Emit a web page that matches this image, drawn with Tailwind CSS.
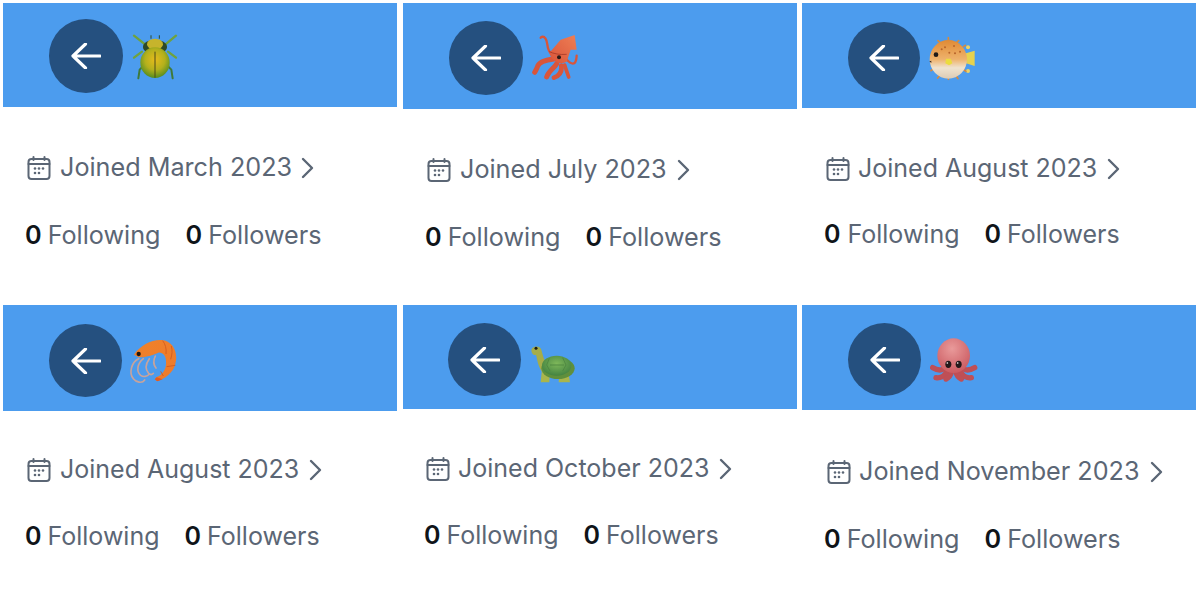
<!DOCTYPE html>
<html lang="en">
<head>
  <meta charset="UTF-8" />
  <title>Joined profiles</title>
  <script src="https://cdn.jsdelivr.net/npm/@tailwindcss/browser@4"></script>
</head>
<body class="bg-white overflow-hidden font-['Inter',sans-serif] text-[25.2px] text-[#5b6675]">
  <svg class="absolute w-0 h-0">
    <symbol id="arrow" viewBox="0 0 30 26"><path d="M29 13H2M14.500 1 2 13l12.500 12" fill="none" stroke="#fff" stroke-width="3.200" stroke-linecap="round" stroke-linejoin="round"/></symbol>
    <symbol id="calendar" viewBox="0 0 24 24"><g fill="none" stroke="#5b6675" stroke-width="2"><rect x="1.500" y="3" width="21" height="20" rx="3"/><path d="M1.500 8h21M6.500 1v3M17.500 1v3" stroke-linecap="round"/></g><g fill="#5b6675"><circle cx="8" cy="12.500" r="1.300"/><circle cx="12" cy="12.500" r="1.300"/><circle cx="16" cy="12.500" r="1.300"/><circle cx="8" cy="17" r="1.300"/><circle cx="12" cy="17" r="1.300"/></g></symbol>
    <symbol id="chevron" viewBox="0 0 13 22"><path d="M2 2l9 9-9 9" fill="none" stroke="#5b6675" stroke-width="2.400" stroke-linecap="round" stroke-linejoin="round"/></symbol>
    <defs>
      <radialGradient id="beetle" cx="0.5" cy="0.4" r="0.62"><stop offset="0" stop-color="#e6bb1c"/><stop offset="0.55" stop-color="#b3b01c"/><stop offset="1" stop-color="#4f8a22"/></radialGradient>
      <linearGradient id="puffer" x1="0" y1="0" x2="0" y2="1"><stop offset="0" stop-color="#e08a34"/><stop offset="0.5" stop-color="#eeb26c"/><stop offset="0.72" stop-color="#efe3cf"/><stop offset="1" stop-color="#dccbb4"/></linearGradient>
      <linearGradient id="squid" x1="1" y1="0" x2="0" y2="1"><stop offset="0" stop-color="#ee7f55"/><stop offset="1" stop-color="#d9553a"/></linearGradient>
      <linearGradient id="shrimp" x1="0" y1="0" x2="1" y2="1"><stop offset="0" stop-color="#f0822a"/><stop offset="1" stop-color="#ee7a2c"/></linearGradient>
      <radialGradient id="octo" cx="0.45" cy="0.3" r="0.75"><stop offset="0" stop-color="#e99a9a"/><stop offset="1" stop-color="#c9575e"/></radialGradient>
      <radialGradient id="shell" cx="0.5" cy="0.4" r="0.65"><stop offset="0" stop-color="#7fb85a"/><stop offset="1" stop-color="#3f7f3f"/></radialGradient>
    </defs>
  </svg>

  <div class="grid grid-cols-[400px_399px_401px] grid-rows-[302px_299px] pt-[3px]">

    <!-- beetle -->
    <section class="pl-[3px]">
      <div class="w-[394px] h-[104px] bg-[#4c9cee] pl-[46px] pt-[16px]">
        <div class="flex items-center">
          <button class="w-[74px] h-[74px] rounded-full bg-[#25507f] flex items-center justify-center"><svg class="w-[30px] h-[26px]"><use href="#arrow"/></svg></button>
          <svg class="w-[50px] h-[50px] ml-[7px] overflow-visible blur-[0.4px]" viewBox="300 62 150 150">
            <g fill="none" stroke="#6fa23e" stroke-width="7" stroke-linecap="round"><path d="M312 76l38 30M438 76l-36 30"/><path d="M312 142l24-18M438 142l-24-18"/></g>
            <g fill="none" stroke="#3f7a3a" stroke-width="6" stroke-linecap="round"><path d="M325 204l4-26 8-8M428 204l-4-26-8-8"/><path d="M363 84v-8M388 84v-8" stroke="#2c4a2a" stroke-width="3"/></g>
            <ellipse cx="375" cy="110" rx="36" ry="22" fill="#2f4a26"/>
            <ellipse cx="375" cy="102" rx="24" ry="17" fill="#c6b42c"/>
            <ellipse cx="375" cy="157" rx="44" ry="46" fill="url(#beetle)"/>
            <path d="M375 124v78" stroke="#4b4a18" stroke-width="3"/>
          </svg>
        </div>
      </div>
      <div class="flex items-center h-[34px] mt-[44px] pl-[24px]">
        <svg class="w-[24px] h-[24px] mr-[9px]"><use href="#calendar"/></svg><span>Joined March 2023</span><svg class="w-[13px] h-[22px] ml-[9px]"><use href="#chevron"/></svg>
      </div>
      <div class="flex items-center h-[34px] mt-[34px] pl-[22px]">
        <b class="font-semibold text-[#0f1419] mr-[6px]">0</b><span class="mr-[25px]">Following</span><b class="font-semibold text-[#0f1419] mr-[6px]">0</b><span>Followers</span>
      </div>
    </section>

    <!-- squid -->
    <section class="pl-[3px]">
      <div class="w-[394px] h-[106px] bg-[#4c9cee] pl-[46px] pt-[18px]">
        <div class="flex items-center">
          <button class="w-[74px] h-[74px] rounded-full bg-[#25507f] flex items-center justify-center"><svg class="w-[30px] h-[26px]"><use href="#arrow"/></svg></button>
          <svg class="w-[50px] h-[50px] ml-[7px] overflow-visible blur-[0.4px]" viewBox="300 68 150 150">
            <g fill="none" stroke="#d9553a" stroke-linecap="round" stroke-linejoin="round">
              <path d="M362 128c-14-12-6-32-16-44-4-6-12-6-14-2" stroke-width="7"/>
              <path d="M372 146c-20 2-46 8-50 24-2 6-6 12-8 16" stroke-width="15"/>
              <path d="M380 160c-8 14-24 22-30 40" stroke-width="15"/>
              <path d="M394 166c2 14 0 28-22 36" stroke-width="14"/>
              <path d="M404 164c4 14 8 24 12 36" stroke-width="11"/>
              <path d="M408 146c14 14 30 26 32-10" stroke-width="7"/>
            </g>
            <path d="M434 74l6 44-18 0-12 36c-18 10-44 2-52-26l34-40z" fill="url(#squid)"/>
            <path d="M358 124c12 6 32 10 52 8" fill="none" stroke="#a83a28" stroke-width="2.500"/>
            <circle cx="387" cy="141" r="6" fill="#2a1a16"/>
          </svg>
        </div>
      </div>
      <div class="flex items-center h-[34px] mt-[44px] pl-[24px]">
        <svg class="w-[24px] h-[24px] mr-[9px]"><use href="#calendar"/></svg><span>Joined July 2023</span><svg class="w-[13px] h-[22px] ml-[10px]"><use href="#chevron"/></svg>
      </div>
      <div class="flex items-center h-[34px] mt-[34px] pl-[22px]">
        <b class="font-semibold text-[#0f1419] mr-[6px]">0</b><span class="mr-[25px]">Following</span><b class="font-semibold text-[#0f1419] mr-[6px]">0</b><span>Followers</span>
      </div>
    </section>

    <!-- blowfish -->
    <section class="pl-[3px] text-[25px]">
      <div class="w-[394px] h-[105px] bg-[#4c9cee] pl-[46px] pt-[19px]">
        <div class="flex items-center">
          <button class="w-[72px] h-[72px] rounded-full bg-[#25507f] flex items-center justify-center"><svg class="w-[30px] h-[26px]"><use href="#arrow"/></svg></button>
          <svg class="w-[50px] h-[50px] ml-[10px] overflow-visible blur-[0.4px]" viewBox="300 69 150 150">
            <path d="M408 130l26-8v46l-26-8z" fill="#e6d24e"/>
            <circle cx="414" cy="112" r="6" fill="#eed264"/><circle cx="414" cy="183" r="6" fill="#eed264"/>
            <g stroke="#d98a3a" stroke-width="5" stroke-linecap="round"><path d="M355 90v-7M330 98l-6-6M380 98l6-6M400 110l6-4M402 180l6 4M380 200l4 6M355 208v-6M328 198l-5 6M308 178l-5 4"/></g>
            <ellipse cx="355" cy="148" rx="56" ry="58" fill="url(#puffer)"/>
            <g fill="#b8642a"><circle cx="345" cy="112" r="3"/><circle cx="372" cy="108" r="3"/><circle cx="390" cy="125" r="3"/><circle cx="358" cy="128" r="3"/><circle cx="335" cy="118" r="3"/><circle cx="375" cy="130" r="3"/></g>
            <circle cx="318" cy="134" r="7" fill="#1f1a18"/>
            <path d="M298 154l6-2v7z" fill="#3a2a22"/>
            <path d="M348 146l14 0 5 14-10 6-11-6z" fill="#ebdc3e"/>
          </svg>
        </div>
      </div>
      <div class="flex items-center h-[34px] mt-[44px] pl-[24px]">
        <svg class="w-[24px] h-[24px] mr-[8px]"><use href="#calendar"/></svg><span>Joined August 2023</span><svg class="w-[13px] h-[22px] ml-[10px]"><use href="#chevron"/></svg>
      </div>
      <div class="flex items-center h-[34px] mt-[32px] pl-[22px]">
        <b class="font-semibold text-[#0f1419] mr-[7px]">0</b><span class="mr-[25px]">Following</span><b class="font-semibold text-[#0f1419] mr-[6px]">0</b><span>Followers</span>
      </div>
    </section>

    <!-- shrimp -->
    <section class="pl-[3px] text-[25px]">
      <div class="w-[394px] h-[106px] bg-[#4c9cee] pl-[46px] pt-[19px]">
        <div class="flex items-center">
          <button class="w-[73px] h-[73px] rounded-full bg-[#25507f] flex items-center justify-center"><svg class="w-[30px] h-[26px]"><use href="#arrow"/></svg></button>
          <svg class="w-[50px] h-[50px] ml-[8px] overflow-visible blur-[0.4px]" viewBox="300 62 150 150">
            <g fill="none" stroke="#c7a39c" stroke-width="5" stroke-linecap="round"><path d="M326 130c-22 10-30 44-16 60 8 10 26 16 34 4"/><path d="M340 130c-18 14-22 38-8 50 8 6 20 4 26-4"/><path d="M358 130c-10 14-14 30-2 44 4 4 10 4 14 0"/><path d="M376 122c-6 12-6 26 2 36"/></g>
            <path d="M312 118C330 90 365 72 395 74 425 76 442 105 438 135 435 165 415 185 385 197 378 199 372 190 380 185 398 178 410 160 408 138 408 122 398 110 385 112 370 118 345 128 325 125z" fill="url(#shrimp)"/>
            <path d="M398 76c8 10 12 24 10 40M424 92c4 14 2 26-2 40M436 150l-26 4M400 182l-8-14" fill="none" stroke="#d0581f" stroke-width="2.500"/>
            <path d="M380 186l-6 6 8 6 16-6z" fill="#e55a20"/>
            <circle cx="326" cy="116" r="6.500" fill="#1f1612"/>
          </svg>
        </div>
      </div>
      <div class="flex items-center h-[34px] mt-[42px] pl-[24px]">
        <svg class="w-[24px] h-[24px] mr-[9px]"><use href="#calendar"/></svg><span>Joined August 2023</span><svg class="w-[13px] h-[22px] ml-[10px]"><use href="#chevron"/></svg>
      </div>
      <div class="flex items-center h-[34px] mt-[33px] pl-[22px]">
        <b class="font-semibold text-[#0f1419] mr-[6px]">0</b><span class="mr-[25px]">Following</span><b class="font-semibold text-[#0f1419] mr-[6px]">0</b><span>Followers</span>
      </div>
    </section>

    <!-- turtle -->
    <section class="pl-[3px] text-[25px]">
      <div class="w-[394px] h-[104px] bg-[#4c9cee] pl-[45px] pt-[18px]">
        <div class="flex items-center">
          <button class="w-[73px] h-[73px] rounded-full bg-[#25507f] flex items-center justify-center"><svg class="w-[30px] h-[26px]"><use href="#arrow"/></svg></button>
          <svg class="w-[50px] h-[50px] ml-[9px] overflow-visible blur-[0.4px]" viewBox="300 58 150 150">
            <path d="M304 102c4-12 26-14 30 0 4 14 6 28 16 42l-14 24c-14-20-14-38-18-50-8 2-14-6-14-16z" fill="#a5ad4a"/>
            <circle cx="318" cy="98" r="4.500" fill="#1c1c14"/>
            <path d="M336 160h24l-2 40h-26zM388 176h28l4 24h-34z" fill="#a9b54c"/>
            <ellipse cx="384" cy="158" rx="50" ry="32" fill="#5f8f3c"/>
            <ellipse cx="380" cy="150" rx="44" ry="30" fill="url(#shell)"/>
            <path d="M358 128l-8 20 10 18M398 126l10 22-10 18M360 148h42" fill="none" stroke="#4c8540" stroke-width="2.500"/>
          </svg>
        </div>
      </div>
      <div class="flex items-center h-[34px] mt-[43px] pl-[23px]">
        <svg class="w-[24px] h-[24px] mr-[8px]"><use href="#calendar"/></svg><span>Joined October 2023</span><svg class="w-[13px] h-[22px] ml-[10px]"><use href="#chevron"/></svg>
      </div>
      <div class="flex items-center h-[34px] mt-[33px] pl-[21px]">
        <b class="font-semibold text-[#0f1419] mr-[6px]">0</b><span class="mr-[25px]">Following</span><b class="font-semibold text-[#0f1419] mr-[6px]">0</b><span>Followers</span>
      </div>
    </section>

    <!-- octopus -->
    <section class="pl-[3px]">
      <div class="w-[394px] h-[105px] bg-[#4c9cee] pl-[46px] pt-[18px]">
        <div class="flex items-center">
          <button class="w-[73px] h-[73px] rounded-full bg-[#25507f] flex items-center justify-center"><svg class="w-[30px] h-[26px]"><use href="#arrow"/></svg></button>
          <svg class="w-[50px] h-[50px] ml-[9px] overflow-visible blur-[0.4px]" viewBox="300 58 150 150">
            <g fill="none" stroke="#bf4f56" stroke-width="16" stroke-linecap="round" stroke-linejoin="round">
              <path d="M340 160c-10 6-18 4-32-4"/><path d="M402 160c10 6 18 4 32-4"/>
              <path d="M350 168c-6 14-20 20-32 18"/><path d="M392 168c6 14 20 20 32 18"/>
              <path d="M364 170c-2 10-8 16-16 20"/><path d="M378 170c2 10 8 16 16 20"/>
            </g>
            <ellipse cx="371" cy="120" rx="49" ry="52" fill="url(#octo)"/>
            <ellipse cx="355" cy="146" rx="9" ry="11" fill="#24181a"/><ellipse cx="386" cy="146" rx="9" ry="11" fill="#24181a"/>
            <circle cx="352" cy="142" r="2.500" fill="#fff"/><circle cx="383" cy="142" r="2.500" fill="#fff"/>
          </svg>
        </div>
      </div>
      <div class="flex items-center h-[34px] mt-[45px] pl-[25px]">
        <svg class="w-[24px] h-[24px] mr-[8px]"><use href="#calendar"/></svg><span>Joined November 2023</span><svg class="w-[13px] h-[22px] ml-[10px]"><use href="#chevron"/></svg>
      </div>
      <div class="flex items-center h-[34px] mt-[34px] pl-[22px]">
        <b class="font-semibold text-[#0f1419] mr-[6px]">0</b><span class="mr-[25px]">Following</span><b class="font-semibold text-[#0f1419] mr-[6px]">0</b><span>Followers</span>
      </div>
    </section>

  </div>
</body>
</html>
